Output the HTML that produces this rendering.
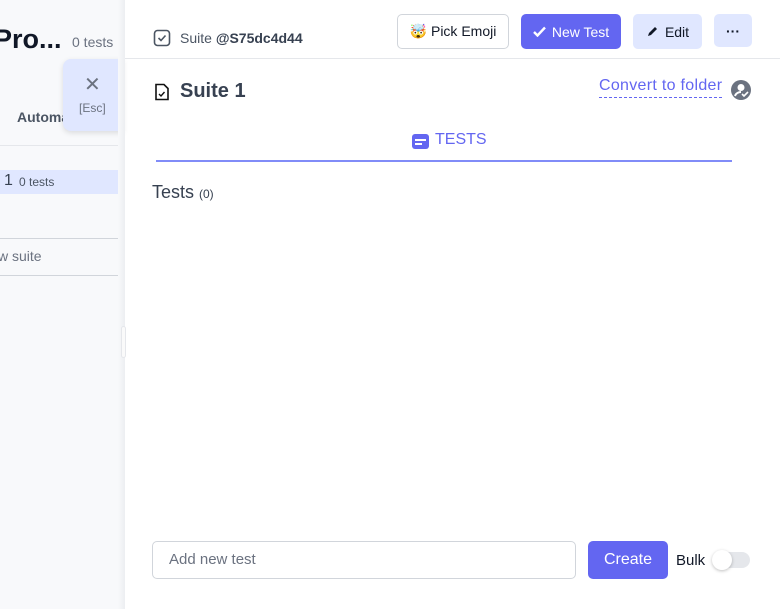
<!DOCTYPE html>
<html><head><meta charset="utf-8"><style>
*{box-sizing:border-box;margin:0;padding:0}
body{width:780px;height:609px;overflow:hidden;font-family:"Liberation Sans",sans-serif;background:#fff;position:relative;color:#1f2937}
.left{position:absolute;left:0;top:0;width:125px;height:609px;background:#f8f9fb}
.shadow{position:absolute;left:118px;top:0;width:7px;height:609px;background:linear-gradient(to right,#f8f9fb,#eceef1)}
.abs{position:absolute;white-space:nowrap}
.btn{position:absolute;border-radius:5px;font-size:14px;display:flex;align-items:center;justify-content:center;gap:6px}
</style></head><body>
<div class="left">
  <div class="abs" style="left:-6px;top:24px;font-size:27px;font-weight:bold;color:#111827">Pro...</div>
  <div class="abs" style="left:72px;top:34px;font-size:14px;color:#6b7280">0 tests</div>
  <div class="abs" style="left:17px;top:109px;font-size:14px;font-weight:bold;color:#4b5563">Automa</div>
  <div style="position:absolute;left:0;top:145px;width:120px;border-top:1px solid #e5e7eb"></div>
  <div style="position:absolute;left:0;top:170px;width:120px;height:24px;background:#e0e7ff"></div>
  <div class="abs" style="left:4px;top:172px;font-size:16px;color:#374151">1</div>
  <div class="abs" style="left:19px;top:175px;font-size:12px;color:#4b5563">0 tests</div>
  <div style="position:absolute;left:0;top:238px;width:120px;border-top:1px solid #d1d5db"></div>
  <div class="abs" style="left:-2px;top:248px;font-size:14px;color:#6b7280">w suite</div>
  <div style="position:absolute;left:0;top:275px;width:120px;border-top:1px solid #d1d5db"></div>
  <div style="position:absolute;left:63px;top:59px;width:60px;height:72px;background:#e0e7ff;border-radius:8px 0 0 8px;box-shadow:0 2px 6px rgba(0,0,0,.12)"></div>
  <div class="abs" style="left:84px;top:72px;font-size:20px;color:#6b7280">✕</div>
  <div class="abs" style="left:79px;top:101px;font-size:12px;color:#6b7280">[Esc]</div>
</div>
<div class="shadow"></div>
<div style="position:absolute;left:121px;top:326px;width:5px;height:32px;border:1px solid #e5e7eb;border-radius:3px;background:#fafafa"></div>

<svg class="abs" style="left:153px;top:29px" width="18" height="18" viewBox="0 0 18 18"><rect x="1.5" y="1.5" width="15" height="15" rx="3" fill="none" stroke="#4b5563" stroke-width="1.6"/><path d="M5.5 9l2.5 2.5 4.5-5" fill="none" stroke="#4b5563" stroke-width="1.6"/></svg>
<div class="abs" style="left:180px;top:30px;font-size:14px;color:#4b5563">Suite <b style="color:#374151">@S75dc4d44</b></div>

<div class="btn" style="left:397px;top:14px;width:112px;height:35px;border:1px solid #d1d5db;color:#111827">🤯 Pick Emoji</div>
<div class="btn" style="left:521px;top:14px;width:100px;height:35px;background:#6366f1;color:#fff"><svg width="13" height="11" viewBox="0 0 13 11"><path d="M1 6l3.5 3.5L12 1.5" fill="none" stroke="#fff" stroke-width="2.4"/></svg>New Test</div>
<div class="btn" style="left:633px;top:14px;width:69px;height:35px;background:#e0e7ff;color:#111827"><svg width="13" height="13" viewBox="0 0 13 13"><path d="M2 11l1-3 6-6 2 2-6 6z" fill="#111827"/></svg>Edit</div>
<div class="btn" style="left:714px;top:14px;width:38px;height:33px;background:#e0e7ff;color:#111827;font-weight:bold">···</div>
<div style="position:absolute;left:125px;top:58px;width:655px;border-top:1px solid #e5e7eb"></div>

<svg class="abs" style="left:154px;top:83px" width="16" height="18" viewBox="0 0 16 18"><path d="M2 1.5h8l4 4v11H2z" fill="none" stroke="#111" stroke-width="1.6"/><path d="M5 11l2 2 3.5-4" fill="none" stroke="#111" stroke-width="1.4"/></svg>
<div class="abs" style="left:180px;top:80px;font-size:20px;font-weight:bold;color:#374151">Suite 1</div>

<div class="abs" style="left:599px;top:77px;font-size:16px;color:#6366f1;border-bottom:1px dashed #6366f1;padding-bottom:2px;letter-spacing:.3px">Convert to folder</div>
<svg class="abs" style="left:731px;top:80px" width="20" height="20" viewBox="0 0 20 20"><circle cx="10" cy="10" r="10" fill="#6b7280"/><circle cx="10" cy="7.5" r="3.5" fill="#fff"/><path d="M4 16c1-3 4-4 6-4" fill="none" stroke="#fff" stroke-width="2"/><path d="M11 14l2 2 4-4" fill="none" stroke="#fff" stroke-width="1.6"/></svg>

<svg class="abs" style="left:412px;top:134px" width="17" height="15" viewBox="0 0 17 15"><rect width="17" height="15" rx="3" fill="#6366f1"/><rect x="3" y="5" width="11" height="2" fill="#fff"/><rect x="3" y="9" width="7" height="2" fill="#fff"/></svg>
<div class="abs" style="left:435px;top:131px;font-size:16px;color:#6366f1">TESTS</div>
<div style="position:absolute;left:156px;top:160px;width:576px;height:2px;background:#818cf8"></div>

<div class="abs" style="left:152px;top:182px;font-size:18px;color:#374151">Tests <span style="font-size:12px">(0)</span></div>

<div style="position:absolute;left:152px;top:541px;width:424px;height:38px;border:1px solid #d1d5db;border-radius:5px"></div>
<div class="abs" style="left:169px;top:551px;font-size:15px;color:#6b7280">Add new test</div>
<div class="btn" style="left:588px;top:541px;width:80px;height:38px;background:#6366f1;color:#fff;font-size:16px">Create</div>
<div class="abs" style="left:676px;top:552px;font-size:15px;color:#111827">Bulk</div>
<div style="position:absolute;left:713px;top:552px;width:37px;height:16px;border-radius:8px;background:#e5e7eb"></div>
<div style="position:absolute;left:712px;top:550px;width:20px;height:20px;border-radius:50%;background:#fff;box-shadow:0 1px 3px rgba(0,0,0,.25)"></div>
</body></html>
